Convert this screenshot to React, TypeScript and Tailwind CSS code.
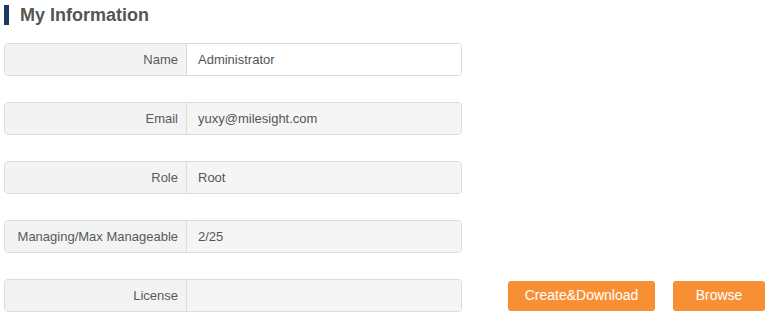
const rows = [
  { label: "Name", value: "Administrator", editable: true },
  { label: "Email", value: "yuxy@milesight.com" },
  { label: "Role", value: "Root" },
  { label: "Managing/Max Manageable", value: "2/25" },
  { label: "License", value: "" },
];

export default function App() {
  return (
    <div
      className="w-[773px] h-[317px] bg-white overflow-hidden"
      style={{ fontFamily: '"Liberation Sans", Arial, sans-serif' }}
    >
      <div className="flex items-center h-[30px] pl-[4px]">
        <div className="w-[5px] h-[20px] bg-[#173a5e]" />
        <h1 className="ml-[11px] text-[18px] font-bold text-[#555555] leading-none">
          My Information
        </h1>
      </div>
      <div className="flex flex-col gap-[26px] pl-[4px] pt-[13px]">
        {rows.map((r) => (
          <div key={r.label} className="flex items-center">
            <div className="flex w-[458px] h-[33px] rounded-[4px] border border-[#dcdcdc] overflow-hidden text-[13px]">
              <div className="w-[182px] shrink-0 bg-[#f3f3f3] border-r border-[#dcdcdc] flex items-center justify-end pr-[8px] text-[#5a5a5a]">
                {r.label}
              </div>
              <div
                className={
                  r.editable
                    ? "flex-1 bg-white flex items-center pl-[11px] text-[#555555]"
                    : "flex-1 bg-[#f5f5f5] flex items-center pl-[11px] text-[#555555]"
                }
              >
                {r.value}
              </div>
            </div>
            {r.label === "License" && (
              <div className="flex gap-[18px] ml-[46px]">
                <button className="w-[147px] h-[30px] rounded-[3px] bg-[#f98f35] text-white text-[14px]">
                  Create&amp;Download
                </button>
                <button className="w-[92px] h-[30px] rounded-[3px] bg-[#f98f35] text-white text-[14px]">
                  Browse
                </button>
              </div>
            )}
          </div>
        ))}
      </div>
    </div>
  );
}
